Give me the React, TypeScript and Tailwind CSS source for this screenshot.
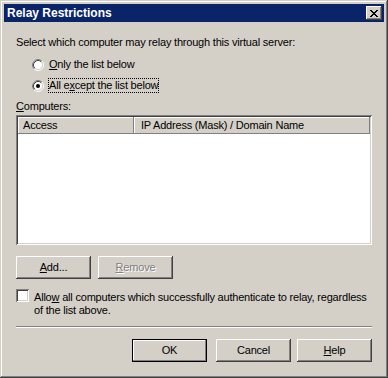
import React from "react";

const raised =
  "shadow-[inset_-1px_-1px_#404040,inset_1px_1px_#ffffff,inset_-2px_-2px_#808080,inset_2px_2px_#d4d0c8]";
const sunken =
  "shadow-[inset_1px_1px_#808080,inset_-1px_-1px_#ffffff,inset_2px_2px_#404040,inset_-2px_-2px_#d4d0c8]";

function Radio({ checked }: { checked?: boolean }) {
  return (
    <svg width="12" height="12" viewBox="0 0 12 12" className="shrink-0">
      <circle cx="6" cy="6" r="4.5" fill="#fff" />
      <path d="M9.89 2.11 A5.5 5.5 0 0 0 2.11 9.89" stroke="#808080" fill="none" />
      <path d="M2.11 9.89 A5.5 5.5 0 0 0 9.89 2.11" stroke="#fff" fill="none" />
      <path d="M9.18 2.82 A4.5 4.5 0 0 0 2.82 9.18" stroke="#404040" fill="none" />
      <path d="M2.82 9.18 A4.5 4.5 0 0 0 9.18 2.82" stroke="#d4d0c8" fill="none" />
      {checked && <circle cx="6" cy="6" r="2" fill="#000" />}
    </svg>
  );
}

function CloseGlyph() {
  const rows = ["XX....XX", ".XX..XX.", "..XXXX..", "...XX...", "..XXXX..", ".XX..XX.", "XX....XX"];
  return (
    <svg width="8" height="7" viewBox="0 0 8 7" shapeRendering="crispEdges">
      {rows.flatMap((r, y) =>
        r.split("").map((c, x) => (c === "X" ? <rect key={`${x}-${y}`} x={x} y={y} width="1" height="1" fill="#000" /> : null))
      )}
    </svg>
  );
}

function Btn({ children, def, disabled }: { children: React.ReactNode; def?: boolean; disabled?: boolean }) {
  return (
    <div
      className={
        "w-[75px] h-[23px] flex items-center justify-center bg-[#d4d0c8] " +
        (def
          ? "shadow-[inset_0_0_0_1px_#000000,inset_-2px_-2px_#808080,inset_2px_2px_#ffffff]"
          : raised) +
        (disabled ? " text-[#808080] [text-shadow:1px_1px_0_#ffffff]" : "")
      }
    >
      {children}
    </div>
  );
}

export default function App() {
  return (
    <div
      className="w-[388px] h-[378px] bg-[#d4d0c8] p-[4px] flex flex-col text-[11px] leading-[13px] tracking-[-0.2px] text-black shadow-[inset_-1px_-1px_#404040,inset_1px_1px_#d4d0c8,inset_-2px_-2px_#808080,inset_2px_2px_#ffffff]"
      style={{ fontFamily: '"Liberation Sans", Arial, sans-serif' }}
    >
      {/* title bar */}
      <div className="h-[18px] bg-[#0a246a] flex items-center pl-[3px] pr-[2px]">
        <span className="text-white font-bold text-[12px] tracking-normal flex-1">Relay Restrictions</span>
        <div className={"w-[16px] h-[14px] bg-[#d4d0c8] flex items-center justify-center " + raised}>
          <CloseGlyph />
        </div>
      </div>

      <div className="flex-1 px-[12px] flex flex-col">
        <div className="mt-[14px] h-[13px]">Select which computer may relay through this virtual server:</div>

        <div className="mt-[8px] flex items-center pl-[16px] h-[15px]">
          <Radio />
          <span className="ml-[4px] border border-transparent">
            <u>O</u>nly the list below
          </span>
        </div>
        <div className="mt-[6px] flex items-center pl-[16px] h-[15px]">
          <Radio checked />
          <span className="ml-[4px] border border-dotted border-black">
            All e<u>x</u>cept the list below
          </span>
        </div>

        <div className="mt-[7px] h-[13px]">
          <u>C</u>omputers:
        </div>

        <div className={"mt-[2px] h-[130px] bg-white p-[2px] " + sunken}>
          <div className="flex h-[17px] w-[352px]">
            <div className="w-[116px] bg-[#d4d0c8] pl-[5px] flex items-center shadow-[inset_-1px_-1px_#808080,inset_1px_1px_#ffffff]">
              Access
            </div>
            <div className="flex-1 bg-[#d4d0c8] pl-[7px] flex items-center shadow-[inset_-1px_-1px_#808080,inset_1px_1px_#ffffff]">
              IP Address (Mask) / Domain Name
            </div>
          </div>
        </div>

        <div className="mt-[11px] flex gap-[7px]">
          <Btn>
            <span>
              <u>A</u>dd...
            </span>
          </Btn>
          <Btn disabled>
            <span>
              <u>R</u>emove
            </span>
          </Btn>
        </div>

        <div className="mt-[10px] flex items-start">
          <div className={"w-[13px] h-[13px] bg-white shrink-0 " + sunken} />
          <div className="ml-[5px] mt-[2px] whitespace-nowrap">
            Allo<u>w</u> all computers which successfully authenticate to relay, regardless
            <br />
            of the list above.
          </div>
        </div>

        <div className="mt-[9px] h-[2px] border-t border-t-[#808080] border-b border-b-white" />

        <div className="mt-[11px] flex justify-end">
          <Btn def>OK</Btn>
          <div className="ml-[9px]">
            <Btn>Cancel</Btn>
          </div>
          <div className="ml-[6px]">
            <Btn>
              <span>
                <u>H</u>elp
              </span>
            </Btn>
          </div>
        </div>
      </div>
    </div>
  );
}
